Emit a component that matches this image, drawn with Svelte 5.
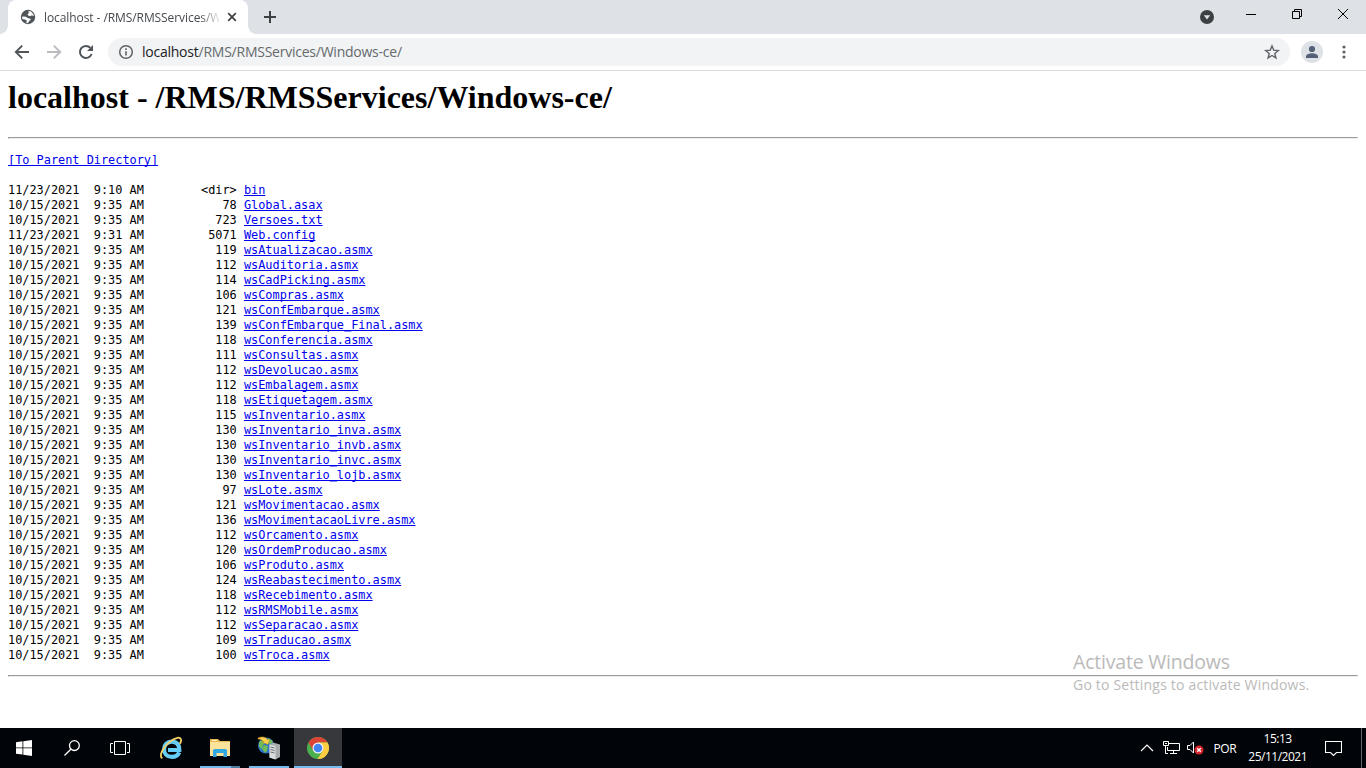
<script lang="ts">

  type Entry = { date: string; size: string; name: string };

  const file = (size: number, name: string, date = '10/15/2021  9:35 AM'): Entry => ({ date, size: String(size), name });

  const entries: Entry[] = [
    { date: '11/23/2021  9:10 AM', size: '<dir>', name: 'bin' },
    file(78, 'Global.asax'),
    file(723, 'Versoes.txt'),
    file(5071, 'Web.config', '11/23/2021  9:31 AM'),
    file(119, 'wsAtualizacao.asmx'),
    file(112, 'wsAuditoria.asmx'),
    file(114, 'wsCadPicking.asmx'),
    file(106, 'wsCompras.asmx'),
    file(121, 'wsConfEmbarque.asmx'),
    file(139, 'wsConfEmbarque_Final.asmx'),
    file(118, 'wsConferencia.asmx'),
    file(111, 'wsConsultas.asmx'),
    file(112, 'wsDevolucao.asmx'),
    file(112, 'wsEmbalagem.asmx'),
    file(118, 'wsEtiquetagem.asmx'),
    file(115, 'wsInventario.asmx'),
    file(130, 'wsInventario_inva.asmx'),
    file(130, 'wsInventario_invb.asmx'),
    file(130, 'wsInventario_invc.asmx'),
    file(130, 'wsInventario_lojb.asmx'),
    file(97, 'wsLote.asmx'),
    file(121, 'wsMovimentacao.asmx'),
    file(136, 'wsMovimentacaoLivre.asmx'),
    file(112, 'wsOrcamento.asmx'),
    file(120, 'wsOrdemProducao.asmx'),
    file(106, 'wsProduto.asmx'),
    file(124, 'wsReabastecimento.asmx'),
    file(118, 'wsRecebimento.asmx'),
    file(112, 'wsRMSMobile.asmx'),
    file(112, 'wsSeparacao.asmx'),
    file(109, 'wsTraducao.asmx'),
    file(100, 'wsTroca.asmx'),
  ];

</script>

<div class="screen">
  <header class="tabstrip">
    <div class="tab">
      <svg class="favicon" width="16" height="16" viewBox="0 0 16 16">
        <circle cx="8" cy="8" r="7.2" fill="#50555a" />
        <path d="M8.2 2.2 10.8 2.3 13.7 5.8 13.5 7 11.8 6.2 10.4 7.2 8.2 6.6 7.5 5.2 9 4.1zM2.2 7.6 6 7.8 8 9.3 10.2 9.4 10.6 11.1 8.9 12.2 8 14.2 6.3 13.8 6.8 11.6 5 10.5 2.3 10z" fill="#fff" />
      </svg>
      <span class="title">localhost - /RMS/RMSServices/Windows-ce/</span>
      <svg class="close" width="16" height="16" viewBox="0 0 16 16">
        <path d="M4.2 4.2l7.6 7.6M11.8 4.2l-7.6 7.6" stroke="#3c4043" stroke-width="1.7" />
      </svg>
    </div>
    <svg class="new-tab" width="14" height="14" viewBox="0 0 14 14">
      <path d="M7 1v12M1 7h12" stroke="#3c4043" stroke-width="2" />
    </svg>
    <div class="window-buttons">
      <svg width="16" height="16" viewBox="0 0 16 16">
        <circle cx="8" cy="8" r="7" fill="#3c4043" />
        <path d="M4.8 6.2h6.4L8 10.6z" fill="#dee1e6" />
      </svg>
      <svg width="12" height="12" viewBox="0 0 12 12"><path d="M1 6.5h10" stroke="#000" /></svg>
      <svg width="12" height="12" viewBox="0 0 12 12">
        <path d="M1.5 3.5h7v7h-7zM3.5 3.5v-2h7v7h-2" fill="none" stroke="#000" />
      </svg>
      <svg width="12" height="12" viewBox="0 0 12 12"><path d="M1 1l10 10M11 1L1 11" stroke="#000" /></svg>
    </div>
  </header>

  <nav class="toolbar">
    <svg class="back" width="16" height="16" viewBox="0 0 16 16">
      <path d="M15 8H2M8.2 1.6L1.8 8l6.4 6.4" fill="none" stroke="#50555a" stroke-width="1.9" />
    </svg>
    <svg class="forward" width="16" height="16" viewBox="0 0 16 16">
      <path d="M1 8h13M7.8 1.6L14.2 8l-6.4 6.4" fill="none" stroke="#b9bbbe" stroke-width="1.9" />
    </svg>
    <svg class="reload" width="16" height="16" viewBox="0 0 16 16">
      <path d="M13.6 10A6 6 0 1 1 12.4 3.9" fill="none" stroke="#50555a" stroke-width="2" />
      <path d="M15 1v6H9z" fill="#50555a" />
    </svg>
    <div class="omnibox">
      <svg class="info" width="16" height="16" viewBox="0 0 16 16">
        <circle cx="8" cy="8" r="6.3" fill="none" stroke="#5f6368" stroke-width="1.5" />
        <path d="M8 4.3v1.6M8 7.2v4.3" stroke="#5f6368" stroke-width="1.6" />
      </svg>
      <span class="url">localhost<span>/RMS/RMSServices/Windows-ce/</span></span>
      <svg class="star" width="16" height="16" viewBox="0 0 16 16">
        <path d="M8 1.9l1.7 4.2 4.6.4-3.5 3 1.1 4.4L8 11.5l-3.9 2.4 1.1-4.4-3.5-3 4.6-.4z" fill="none" stroke="#5f6368" stroke-width="1.4" />
      </svg>
    </div>
    <svg class="avatar" width="22" height="22" viewBox="0 0 22 22">
      <circle cx="11" cy="11" r="11" fill="#dee1e6" />
      <circle cx="11" cy="8" r="3.1" fill="#546078" />
      <path d="M5 17v-1.7c0-2 3.8-3.1 6-3.1s6 1.1 6 3.1V17z" fill="#546078" />
    </svg>
    <svg class="menu" width="4" height="14" viewBox="0 0 4 14" fill="#5f6368">
      <circle cx="2" cy="2" r="1.6" /><circle cx="2" cy="7" r="1.6" /><circle cx="2" cy="12" r="1.6" />
    </svg>
  </nav>

  <main>
    <h1>localhost - /RMS/RMSServices/Windows-ce/</h1>
    <hr>
    <div class="listing">
      <a class="parent" href="#parent">[To Parent Directory]</a>
      {#each entries as entry}
        <div class="entry">
          <span>{entry.date}</span>
          <span class="size">{entry.size}</span>
          <a href="#{entry.name}">{entry.name}</a>
        </div>
      {/each}
    </div>
    <hr>
  </main>

  <aside class="watermark">
    <div class="headline">Activate Windows</div>
    <div class="hint">Go to Settings to activate Windows.</div>
  </aside>

  <footer class="taskbar">
    <div class="task">
      <svg width="16" height="16" viewBox="0 0 16 16" fill="#fff">
        <path d="M0 2.2l6.5-.9v6.2H0zM7.3 1.2L16 0v7.5H7.3zM0 8.3h6.5v6.3L0 13.7zM7.3 8.3H16V16l-8.7-1.2z" />
      </svg>
    </div>
    <div class="task">
      <svg width="16" height="16" viewBox="0 0 16 16" fill="none" stroke="#fff" stroke-width="1.3">
        <circle cx="10.4" cy="5.6" r="4.9" /><path d="M6.8 9.2L.5 15.5" />
      </svg>
    </div>
    <div class="task">
      <svg width="20" height="16" viewBox="0 0 20 16" fill="none" stroke="#fff">
        <path d="M4.5 1.5h11v13h-11zM3 3.5H.5v9H3M17 3.5h2.5v9H17" />
      </svg>
    </div>
    <div class="task browser">
      <svg width="24" height="24" viewBox="0 0 24 24" fill="none">
        <path d="M20.2 16.4c-1.2 2.900-3.900 4.500-7.300 4.500-4.700 0-7.900-3.100-7.900-7.500s3.300-7.800 7.900-7.800c4.700 0 7.600 3.300 7.400 8.400H9" stroke="#66cdf7" stroke-width="4.200" />
        <path d="M3.400 22.300C-.6 20.200 4 11 11 5.600c5.300-4.200 11.300-5.600 11.100-1.200-.1 1.300-.6 2.400-1.300 3.600" stroke="#f8d264" stroke-width="1.800" />
      </svg>
    </div>
    <div class="task open grouped">
      <svg width="22" height="20" viewBox="0 0 22 20">
        <path d="M1 1h8l2 2h10v15H1z" fill="#e7b94f" />
        <path d="M1 4h20v14H1z" fill="#fce39b" />
        <path d="M3 2h5v1H3z" fill="#fff4cf" />
        <path d="M4 19v-6.5Q4 11 5.5 11h11q1.5 0 1.5 1.5V19h-3.5v-4h-7v4z" fill="#35a9df" />
      </svg>
    </div>
    <div class="task open">
      <svg width="24" height="24" viewBox="0 0 24 24">
        <circle cx="9" cy="9.500" r="8" fill="#2973c8" />
        <path d="M2 6l5-3 2 3-3 3-1 4-3-2zM7 9l4 1-1 5-2 2-3-4zM11 2l5 3-2 3-3-1z" fill="#71bc58" />
        <path d="M1 2c4-2 8-1 9.500 1.500h2l-1.500 5-6-2.500h2C5.500 4 3.500 3 1 3z" fill="#ffd04b" stroke="#c48a12" stroke-width=".5" />
        <path d="M12.500 8.500L16 6.500l7 2V21l-4.500 2.500-6-2z" fill="#a7abac" />
        <path d="M12.500 8.500l6 1.500v13.500l-6-2z" fill="#dadddd" />
        <path d="M13.500 11l4 1M13.500 13.500l4 1M13.500 16l4 1" stroke="#686e70" />
      </svg>
    </div>
    <div class="task active">
      <svg width="24" height="24" viewBox="0 0 24 24">
        <circle cx="12" cy="12" r="11" fill="#4caf50" />
        <path d="M12 12L2.470 6.500A11 11 0 0 1 21.530 6.500H12z" fill="#dc4437" />
        <path d="M12 6.500h9.530A11 11 0 0 1 11.500 23l5.260-8.250z" fill="#ffcd40" />
        <path d="M2.470 6.500l4.770 8.250L12 12V6.500z" fill="#dc4437" />
        <circle cx="12" cy="12" r="5.500" fill="#f3f3f3" />
        <circle cx="12" cy="12" r="4.300" fill="#4285f4" />
      </svg>
    </div>

    <div class="tray">
      <svg class="chevron" width="14" height="8" viewBox="0 0 14 8" fill="none" stroke="#fff" stroke-width="1.2">
        <path d="M1 7l6-6 6 6" />
      </svg>
      <svg class="network" width="17" height="14" viewBox="0 0 17 14" fill="none" stroke="#fff">
        <path d="M6 2.500h10.500v7h-12V6M.5.500h5v4h-5zM2.500 4.500v8H5M10.500 9.500v3M7 12.500h7M2 2.500h2" />
      </svg>
      <svg class="volume" width="17" height="14" viewBox="0 0 17 14">
        <path d="M.5 4.500h2.500l3.500-3.500v11L3 8.500H.5z" fill="none" stroke="#fff" />
        <circle cx="12" cy="9" r="4.500" fill="#d9252b" />
        <path d="M10.200 7.200l3.600 3.600M13.800 7.200l-3.600 3.600" stroke="#fff" stroke-width="1.300" />
      </svg>
      <span class="language">POR</span>
      <div class="clock">
        <span>15:13</span>
        <span>25/11/2021</span>
      </div>
      <svg class="notifications" width="17" height="17" viewBox="0 0 17 17" fill="none" stroke="#fff" stroke-width="1.100">
        <path d="M.5 1.500h16v11h-5l-3 3-3-3h-5z" />
      </svg>
      <div class="show-desktop"></div>
    </div>
  </footer>
</div>

<style>
  :global(body) {
    margin: 0;
    overflow: hidden;
    background: #fff;
  }

  .screen {
    position: relative;
    display: flex;
    flex-direction: column;
    width: 1366px;
    height: 768px;
    overflow: hidden;
    background: #fff;
    font-family: "Open Sans", "Noto Sans", sans-serif;
  }

  svg {
    display: block;
    flex: none;
  }

  .tabstrip {
    display: flex;
    height: 34px;
    flex: none;
    padding-left: 8px;
    background: #dee1e6;
  }

  .tab {
    position: relative;
    display: flex;
    align-items: center;
    box-sizing: border-box;
    width: 240px;
    height: 34px;
    padding: 0 8px 0 12px;
    border-radius: 8px 8px 0 0;
    background: #fff;
  }

  .tab::before,
  .tab::after {
    content: "";
    position: absolute;
    bottom: 0;
    width: 8px;
    height: 8px;
  }

  .tab::before {
    left: -8px;
    background: radial-gradient(circle at 0 0, #dee1e6 7.5px, #fff 8px);
  }

  .tab::after {
    right: -8px;
    background: radial-gradient(circle at 100% 0, #dee1e6 7.5px, #fff 8px);
  }

  .title {
    width: 175px;
    margin-left: 8px;
    overflow: hidden;
    white-space: nowrap;
    font-size: 12px;
    letter-spacing: -0.08px;
    color: #45494d;
    -webkit-mask-image: linear-gradient(to right, #000 155px, transparent 178px);
    mask-image: linear-gradient(to right, #000 155px, transparent 178px);
  }

  .close {
    margin-left: 5px;
  }

  .new-tab {
    margin: 10px 0 0 15px;
  }

  .window-buttons {
    display: flex;
    margin-left: auto;
    padding-right: 17px;
  }

  .window-buttons svg {
    margin: 8px 0 0 34px;
  }

  .window-buttons svg:first-child {
    margin-top: 9px;
    margin-right: -4px;
  }

  .toolbar {
    display: flex;
    align-items: center;
    flex: none;
    height: 36px;
    padding: 0 20px 0 14px;
    border-bottom: 1px solid #d9dbdf;
  }

  .forward,
  .reload {
    margin-left: 16px;
  }

  .omnibox {
    display: flex;
    align-items: center;
    flex: 1;
    box-sizing: border-box;
    height: 28px;
    margin-left: 14px;
    padding: 0 10px;
    border-radius: 14px;
    background: #f1f3f4;
  }

  .url {
    flex: 1;
    margin-left: 8px;
    font-size: 14px;
    line-height: 20px;
    letter-spacing: -0.24px;
    color: #202124;
  }

  .url span {
    color: #66696d;
  }

  .avatar {
    margin-left: 11px;
  }

  .menu {
    margin-left: 19px;
  }

  main {
    flex: 1;
    padding: 8px 8px 0;
    font-family: "Liberation Serif", serif;
    color: #000;
  }

  h1 {
    margin: 0 0 21px;
    font-size: 32px;
    line-height: 37px;
  }

  hr {
    height: 0;
    margin: 0;
    border: 1px solid;
    border-color: #9a9a9a #eee #eee #9a9a9a;
  }

  .listing {
    display: grid;
    grid-template-rows: 30px;
    grid-auto-rows: 15px;
    padding: 14px 0 12px;
    font-family: "DejaVu Sans Mono", monospace;
    font-size: 11.88px;
    line-height: 15px;
  }

  .parent {
    justify-self: start;
    height: 15px;
  }

  .entry {
    display: grid;
    grid-template-columns: 19ch 13ch 1fr;
    white-space: pre;
  }

  .entry a {
    justify-self: start;
    margin-left: 1ch;
  }

  .size {
    text-align: right;
  }

  a {
    color: #0000ee;
    text-decoration: underline;
    text-underline-offset: 1px;
    text-decoration-thickness: 1px;
    text-decoration-skip-ink: none;
  }

  .watermark {
    position: absolute;
    left: 1073px;
    top: 650px;
    white-space: nowrap;
    color: #bababa;
  }

  .headline {
    font-size: 19.5px;
    line-height: 24px;
    letter-spacing: -0.2px;
  }

  .hint {
    font-size: 14px;
    line-height: 22px;
    letter-spacing: 0.2px;
  }

  .taskbar {
    display: flex;
    flex: none;
    height: 40px;
    background: #010409;
    color: #fff;
  }

  .task {
    display: flex;
    align-items: center;
    justify-content: center;
    width: 48px;
    height: 40px;
  }

  .browser {
    width: 54px;
  }

  .open {
    width: 40px;
    margin: 0 7px 0 2px;
    box-shadow: inset 0 -2px #76b9ed;
  }

  .open + .open {
    margin-right: 5px;
  }

  .grouped {
    background: linear-gradient(to right, transparent 31px, #4f7c9f 31px) bottom / 100% 2px no-repeat,
      linear-gradient(to right, #76b9ed 31px, transparent 31px) bottom / 100% 2px no-repeat;
    box-shadow: none;
  }

  .active {
    background: #36383b;
    box-shadow: inset 0 -2px #76b9ed;
  }

  .tray {
    display: flex;
    align-items: center;
    margin-left: auto;
    font-size: 12px;
  }

  .network {
    margin-left: 9px;
  }

  .volume {
    margin-left: 7px;
  }

  .language {
    margin-left: 10px;
    letter-spacing: -0.4px;
  }

  .clock {
    display: flex;
    flex-direction: column;
    align-items: center;
    margin-left: 12px;
    line-height: 18px;
    letter-spacing: -0.5px;
  }

  .notifications {
    margin-left: 18px;
  }

  .show-desktop {
    width: 4px;
    height: 40px;
    margin-left: 19px;
    border-left: 1px solid #62656a;
  }
</style>
